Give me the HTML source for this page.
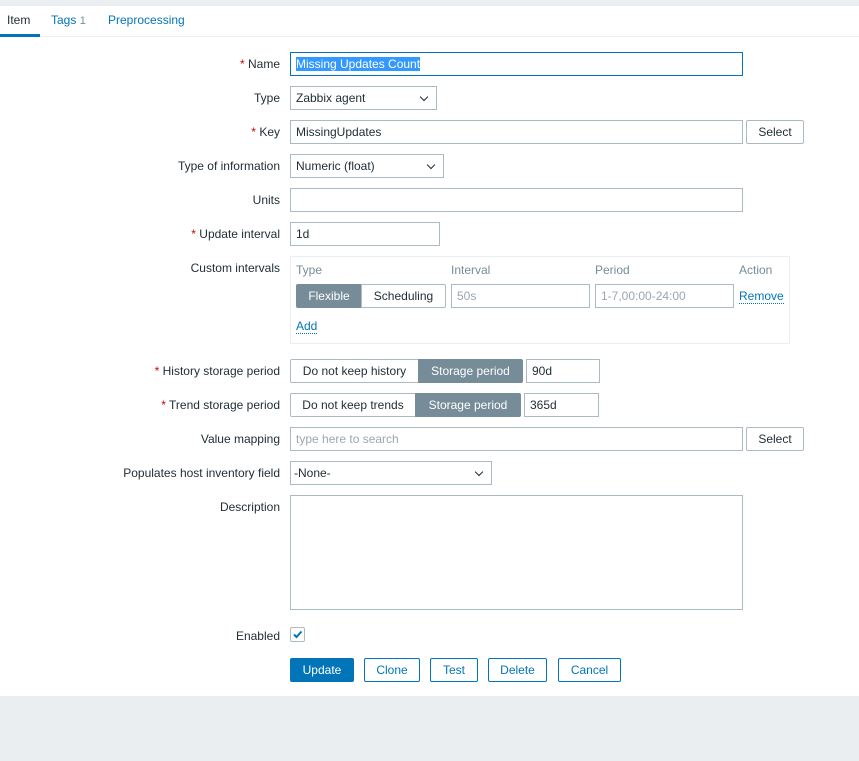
<!DOCTYPE html>
<html><head><style>
body{margin:0;width:859px;height:761px;background:#ebeef0;font-family:"Liberation Sans",Arial,sans-serif;font-size:12px;color:#1f2c33;position:relative;overflow:hidden}
.w{position:absolute;left:0;top:6px;width:859px;height:690px;background:#fff}
.a{position:absolute}
.lbl{position:absolute;right:579px;text-align:right;white-space:nowrap}
.req:before{content:"* ";color:#d40000}
.in{position:absolute;box-sizing:border-box;border:1px solid #acbbc2;background:#fff;height:24px;line-height:22px;padding-left:5px;white-space:nowrap}
.sel:after{content:"";position:absolute;right:9px;top:7px;width:5px;height:5px;border-right:1px solid #1f2c33;border-bottom:1px solid #1f2c33;transform:rotate(45deg)}
.btn{position:absolute;box-sizing:border-box;border:1px solid #acbbc2;background:#fff;height:24px;line-height:22px;text-align:center;border-radius:2px}
.on{background:#768d99;color:#fff;border-color:#768d99}
.bb{position:absolute;box-sizing:border-box;border:1px solid #0275b8;color:#0275b8;height:24px;line-height:22px;text-align:center;border-radius:2px;background:#fff}
.ph{color:#9aa8ae}
.lnk{color:#0275b8;border-bottom:1px dotted #0275b8}
</style></head><body>
<div class="w"></div>
<div class="a" style="left:0;top:36px;width:859px;height:1px;background:#ebeef0"></div>
<div class="a" style="left:7px;top:13px">Item</div>
<div class="a" style="left:0;top:34px;width:40px;height:3px;background:#0275b8"></div>
<div class="a" style="left:51px;top:13px;color:#0275b8">Tags <span style="font-size:11px;color:#768d99">1</span></div>
<div class="a" style="left:108px;top:13px;color:#0275b8">Preprocessing</div>

<div class="lbl req" style="top:57px">Name</div>
<div class="in" style="left:290px;top:52px;width:453px;border-color:#0275b8"><span style="background:#3399ff;color:#fff">Missing Updates Count</span></div>
<div class="lbl" style="top:91px">Type</div>
<div class="in sel" style="left:290px;top:86px;width:147px">Zabbix agent</div>
<div class="lbl req" style="top:125px">Key</div>
<div class="in" style="left:290px;top:120px;width:453px">MissingUpdates</div>
<div class="btn" style="left:746px;top:120px;width:58px">Select</div>
<div class="lbl" style="top:159px">Type of information</div>
<div class="in sel" style="left:290px;top:154px;width:154px">Numeric (float)</div>
<div class="lbl" style="top:193px">Units</div>
<div class="in" style="left:290px;top:188px;width:453px"></div>
<div class="lbl req" style="top:227px">Update interval</div>
<div class="in" style="left:290px;top:222px;width:150px">1d</div>
<div class="lbl" style="top:261px">Custom intervals</div>
<div class="a" style="left:290px;top:256px;width:500px;height:88px;border:1px solid #ebeef0;box-sizing:border-box"></div>
<div class="a ph" style="left:296px;top:263px;color:#768d99">Type</div>
<div class="a" style="left:451px;top:263px;color:#768d99">Interval</div>
<div class="a" style="left:595px;top:263px;color:#768d99">Period</div>
<div class="a" style="left:739px;top:263px;color:#768d99">Action</div>
<div class="btn on" style="left:296px;top:284px;width:66px;border-radius:2px 0 0 2px">Flexible</div>
<div class="btn" style="left:361px;top:284px;width:85px;border-radius:0 2px 2px 0">Scheduling</div>
<div class="in ph" style="left:451px;top:284px;width:139px">50s</div>
<div class="in ph" style="left:595px;top:284px;width:139px">1-7,00:00-24:00</div>
<div class="a" style="left:739px;top:289px"><span class="lnk">Remove</span></div>
<div class="a" style="left:296px;top:319px"><span class="lnk">Add</span></div>

<div class="lbl req" style="top:364px">History storage period</div>
<div class="btn" style="left:290px;top:359px;width:129px;border-radius:2px 0 0 2px">Do not keep history</div>
<div class="btn on" style="left:418px;top:359px;width:105px;border-radius:0 2px 2px 0">Storage period</div>
<div class="in" style="left:526px;top:359px;width:74px">90d</div>
<div class="lbl req" style="top:398px">Trend storage period</div>
<div class="btn" style="left:290px;top:393px;width:126px;border-radius:2px 0 0 2px">Do not keep trends</div>
<div class="btn on" style="left:415px;top:393px;width:106px;border-radius:0 2px 2px 0">Storage period</div>
<div class="in" style="left:524px;top:393px;width:75px">365d</div>
<div class="lbl" style="top:432px">Value mapping</div>
<div class="in ph" style="left:290px;top:427px;width:453px">type here to search</div>
<div class="btn" style="left:746px;top:427px;width:58px">Select</div>
<div class="lbl" style="top:466px">Populates host inventory field</div>
<div class="in sel" style="left:290px;top:461px;width:202px;padding-left:3px">-None-</div>
<div class="lbl" style="top:500px">Description</div>
<div class="in" style="left:290px;top:495px;width:453px;height:115px"></div>
<div class="lbl" style="top:629px">Enabled</div>
<div class="a" style="left:290px;top:627px;width:15px;height:15px;box-sizing:border-box;border:1px solid #acbbc2;border-radius:2px"><svg width="13" height="13" style="position:absolute;left:0;top:0"><path d="M3 6.5 L5.5 9 L10.5 3.5" stroke="#0275b8" stroke-width="2" fill="none"/></svg></div>
<div class="bb" style="left:290px;top:658px;width:64px;background:#0275b8;color:#fff">Update</div>
<div class="bb" style="left:364px;top:658px;width:56px">Clone</div>
<div class="bb" style="left:430px;top:658px;width:48px">Test</div>
<div class="bb" style="left:488px;top:658px;width:59px">Delete</div>
<div class="bb" style="left:558px;top:658px;width:63px">Cancel</div>
</body></html>
